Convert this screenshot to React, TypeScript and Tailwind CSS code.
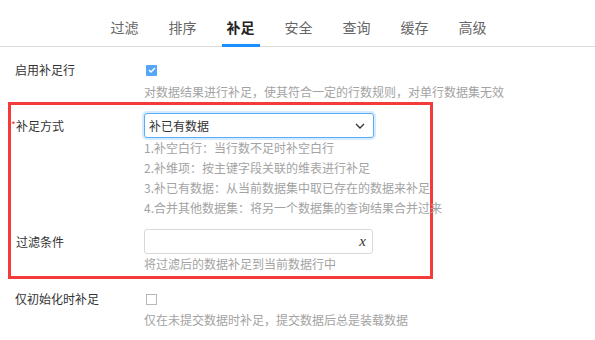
import React from 'react';

const tabs = ['过滤', '排序', '补足', '安全', '查询', '缓存', '高级'];

const modeHelp = [
  '1.补空白行：当行数不足时补空白行',
  '2.补维项：按主键字段关联的维表进行补足',
  '3.补已有数据：从当前数据集中取已存在的数据来补足',
  '4.合并其他数据集：将另一个数据集的查询结果合并过来',
];

function Help({ children }: { children: React.ReactNode }) {
  return <div className="text-[12px] leading-[20px] text-[#a3a3a3] whitespace-nowrap">{children}</div>;
}

function Checkbox({ checked }: { checked?: boolean }) {
  if (checked) {
    return (
      <span className="ml-[2px] flex h-[11px] w-[11px] items-center justify-center rounded-[1px] bg-[#55a6f6]">
        <svg width="8" height="6" viewBox="0 0 8 6" fill="none">
          <path d="M1 3l2 2 4-4" stroke="#fff" strokeWidth="1.4" />
        </svg>
      </span>
    );
  }
  return <span className="ml-[2px] block h-[11px] w-[11px] border border-[#b8b8b8] bg-white" />;
}

export default function App() {
  return (
    <div
      className="w-[595px] h-[340px] overflow-hidden bg-white text-[#333]"
      style={{ fontFamily: '"Noto Sans CJK SC", "Noto Sans", sans-serif' }}
    >
      {/* Tabs */}
      <nav className="flex h-[47px] justify-center gap-[20px] border-b border-[#dcdcdc] pl-[2px]">
        {tabs.map((t) => {
          const active = t === '补足';
          return (
            <div
              key={t}
              className={
                'relative px-[5px] pt-[17px] text-[14px] leading-[20px] ' +
                (active ? 'font-bold text-[#222]' : 'text-[#666]')
              }
            >
              {t}
              {active && <span className="absolute bottom-[-1px] left-0 right-0 h-[3px] bg-[#1890ff]" />}
            </div>
          );
        })}
      </nav>

      {/* 启用补足行 */}
      <div className="mt-[13px] flex pl-[15px]">
        <div className="w-[129px] shrink-0 text-[12px] leading-[20px]">启用补足行</div>
        <div>
          <div className="flex h-[20px] items-center">
            <Checkbox checked />
          </div>
          <div className="mt-[2px]">
            <Help>对数据结果进行补足，使其符合一定的行数规则，对单行数据集无效</Help>
          </div>
        </div>
      </div>

      {/* highlighted section */}
      <div className="ml-[8px] w-[425px] border-[3px] border-[#f43b3b] pb-[2px] pt-[8px]">
        <div className="flex">
          <div className="relative w-[133px] shrink-0 pl-[5px] pt-[3px] text-[12px] leading-[20px]">
            <span className="absolute left-[0px] top-[5px] text-[10px] leading-[14px] text-[#f33]">*</span>
            补足方式
          </div>
          <div className="shrink-0">
            <div className="flex h-[25px] w-[230px] items-center justify-between rounded-[3px] border border-[#5aacf7] pl-[4px] pr-[8px] text-[12px] shadow-[0_0_0_2px_rgba(24,144,255,0.18)]">
              <span>补已有数据</span>
              <svg width="10" height="6" viewBox="0 0 10 6" fill="none">
                <path d="M1 1l4 4 4-4" stroke="#333" strokeWidth="1.3" />
              </svg>
            </div>
            {modeHelp.map((h) => (
              <Help key={h}>{h}</Help>
            ))}
          </div>
        </div>

        <div className="mt-[11px] flex">
          <div className="w-[133px] shrink-0 pl-[5px] pt-[3px] text-[12px] leading-[20px]">过滤条件</div>
          <div className="shrink-0">
            <div className="flex h-[25px] w-[229px] items-center justify-end rounded-[3px] border border-[#d9d9d9] pr-[6px]">
              <span
                className="text-[15px] italic leading-none text-[#333]"
                style={{ fontFamily: '"Liberation Serif", serif' }}
              >
                x
              </span>
            </div>
            <Help>将过滤后的数据补足到当前数据行中</Help>
          </div>
        </div>
      </div>

      {/* 仅初始化时补足 */}
      <div className="mt-[10px] flex pl-[15px]">
        <div className="w-[129px] shrink-0 text-[12px] leading-[20px]">仅初始化时补足</div>
        <div>
          <div className="flex h-[20px] items-center">
            <Checkbox />
          </div>
          <div className="mt-[1px]">
            <Help>仅在未提交数据时补足，提交数据后总是装载数据</Help>
          </div>
        </div>
      </div>
    </div>
  );
}
